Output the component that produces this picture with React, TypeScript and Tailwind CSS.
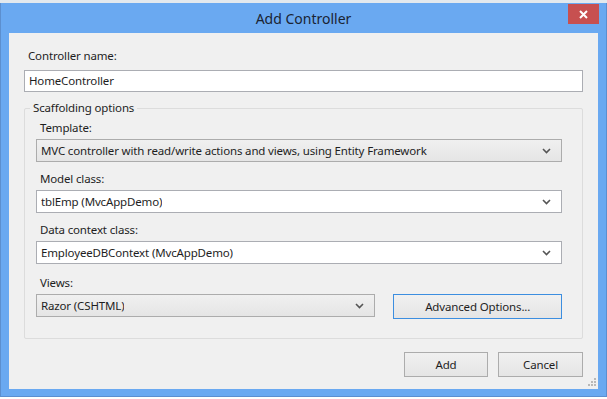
import React from "react";

const FONT = { fontFamily: '"Noto Sans", "Liberation Sans", sans-serif' };

function Chevron() {
  return (
    <svg width="9" height="6" viewBox="0 0 9 6" className="shrink-0">
      <path d="M1 1 L4.5 4.5 L8 1" fill="none" stroke="#555" strokeWidth="1.6" />
    </svg>
  );
}

function Combo({
  value,
  white,
  className = "",
}: {
  value: string;
  white?: boolean;
  className?: string;
}) {
  return (
    <div
      className={`flex h-[23px] items-center justify-between border pl-[4px] pr-[10px] ${
        white
          ? "border-[#abadb3] bg-white"
          : "border-[#acacac] bg-gradient-to-b from-[#f0f0f0] to-[#e5e5e5]"
      } ${className}`}
    >
      <span className="truncate text-[11.5px] tracking-[-0.15px] text-[#1e1e1e]">{value}</span>
      <Chevron />
    </div>
  );
}

function Field({
  label,
  children,
  className = "",
}: {
  label: string;
  children: React.ReactNode;
  className?: string;
}) {
  return (
    <div className={`flex flex-col ${className}`}>
      <div className="h-[16px] pl-[4px] text-[11.5px] leading-[16px] tracking-[-0.15px] text-[#1e1e1e]">
        {label}
      </div>
      <div className="mt-[3px]">{children}</div>
    </div>
  );
}

function Button({
  label,
  focused,
  className = "",
}: {
  label: string;
  focused?: boolean;
  className?: string;
}) {
  return (
    <div
      className={`flex h-[25px] items-center justify-center border bg-gradient-to-b from-[#f0f0f0] to-[#e5e5e5] text-[11.5px] tracking-[-0.15px] text-[#1e1e1e] ${
        focused ? "border-[#3c8ee0]" : "border-[#acacac]"
      } ${className}`}
    >
      {label}
    </div>
  );
}

export default function App() {
  return (
    <div className="flex h-[399px] w-[607px] flex-col overflow-hidden bg-white" style={FONT}>
      <div className="h-[3px] bg-[#e3e9ee]" />
      <div className="flex h-[394px] flex-col border-x border-b border-[#5c8fcf] bg-[#6aa9f1]">
        {/* title bar */}
        <div className="relative flex h-[30px] items-center justify-center">
          <span className="text-[14px] text-[#1a2433]">Add Controller</span>
          <div className="absolute right-[7px] top-[1px] flex h-[20px] w-[31px] items-center justify-center bg-[#c75050]">
            <svg width="9" height="9" viewBox="0 0 9 9">
              <path d="M1 1 L8 8 M8 1 L1 8" stroke="#fff" strokeWidth="2" />
            </svg>
          </div>
        </div>

        {/* client area */}
        <div className="relative mx-[8px] h-[356px] bg-[#f0f0f0] px-[15px] pt-px">
          <div className="mt-[14px] h-[16px] pl-[4px] text-[11.5px] leading-[16px] tracking-[-0.15px] text-[#1e1e1e]">
            Controller name:
          </div>
          <div className="mt-[6px] flex h-[22px] items-center border border-[#abadb3] bg-white pl-[4px] text-[11.5px] tracking-[-0.15px] text-[#1e1e1e]">
            HomeController
          </div>

          {/* scaffolding group */}
          <div className="relative mt-[16px] h-[231px] rounded-[2px] border border-[#dcdcdc] pl-[11px] pr-[20px] pt-[11px]">
            <div className="absolute left-[5px] top-[-9px] bg-[#f0f0f0] px-[3px] text-[11.5px] leading-[16px] tracking-[-0.15px] text-[#1e1e1e]">
              Scaffolding options
            </div>
            <div className="flex flex-col gap-[9px]">
              <Field label="Template:">
                <Combo value="MVC controller with read/write actions and views, using Entity Framework" />
              </Field>
              <Field label="Model class:">
                <Combo white value="tblEmp (MvcAppDemo)" />
              </Field>
              <Field label="Data context class:">
                <Combo white value="EmployeeDBContext (MvcAppDemo)" />
              </Field>
              <Field label="Views:" className="mt-[2px]">
                <div className="flex items-start">
                  <Combo value="Razor (CSHTML)" className="w-[340px]" />
                  <Button label="Advanced Options..." focused className="ml-[18px] w-[169px]" />
                </div>
              </Field>
            </div>
          </div>

          <div className="mt-[13px] flex justify-end gap-[10px]">
            <Button label="Add" className="w-[84px]" />
            <Button label="Cancel" className="w-[85px]" />
          </div>

          {/* size grip */}
          <svg className="absolute bottom-[2px] right-[1px]" width="11" height="11" viewBox="0 0 11 11">
            <g fill="#b8b8b8">
              <rect x="8" y="2" width="2" height="2" />
              <rect x="5" y="5" width="2" height="2" />
              <rect x="8" y="5" width="2" height="2" />
              <rect x="2" y="8" width="2" height="2" />
              <rect x="5" y="8" width="2" height="2" />
              <rect x="8" y="8" width="2" height="2" />
            </g>
          </svg>
        </div>
      </div>
    </div>
  );
}
